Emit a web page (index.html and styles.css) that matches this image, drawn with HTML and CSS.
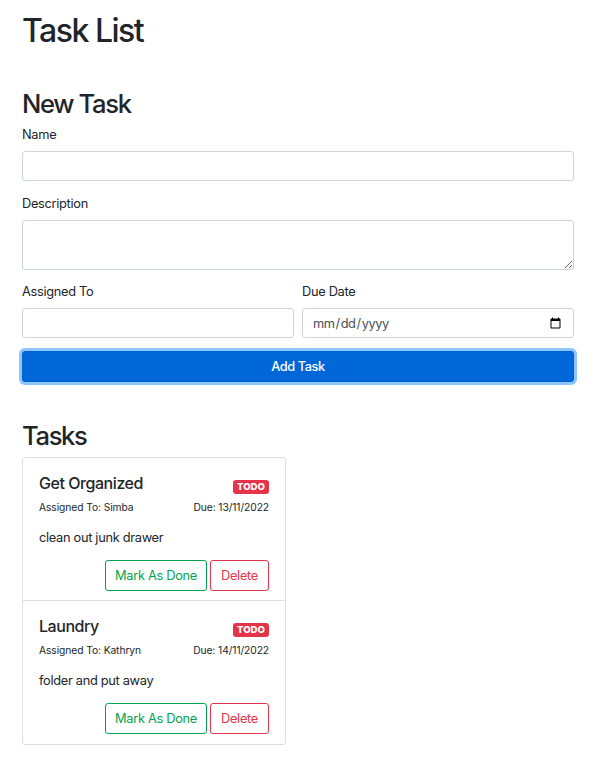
FILE: index.html
```html
<!DOCTYPE html>
<html lang="en">
<head>
<meta charset="utf-8">
<title>Task List</title>
<link rel="stylesheet" href="styles.css">
</head>
<body>
<main class="container">
  <h1>Task List</h1>
  <section>
    <h2>New Task</h2>
    <form class="task-form">
      <div class="group">
        <label for="name">Name</label>
        <input class="control" id="name" type="text">
      </div>
      <div class="group">
        <label for="description">Description</label>
        <textarea class="control area" id="description"></textarea>
      </div>
      <div class="row">
        <div class="group">
          <label for="assigned">Assigned To</label>
          <input class="control" id="assigned" type="text">
        </div>
        <div class="group">
          <label for="due">Due Date</label>
          <input class="control date" id="due" type="date">
        </div>
      </div>
      <button class="btn primary" type="button">Add Task</button>
    </form>
  </section>
  <section>
    <h2>Tasks</h2>
    <ul class="list">
      <li class="item">
        <div class="head"><h5>Get Organized</h5><span class="badge">TODO</span></div>
        <div class="meta"><span>Assigned To: Simba</span><span>Due: 13/11/2022</span></div>
        <p>clean out junk drawer</p>
        <div class="actions"><button class="btn done" type="button">Mark As Done</button><button class="btn delete" type="button">Delete</button></div>
      </li>
      <li class="item">
        <div class="head"><h5>Laundry</h5><span class="badge">TODO</span></div>
        <div class="meta"><span>Assigned To: Kathryn</span><span>Due: 14/11/2022</span></div>
        <p>folder and put away</p>
        <div class="actions"><button class="btn done" type="button">Mark As Done</button><button class="btn delete" type="button">Delete</button></div>
      </li>
    </ul>
  </section>
</main>
</body>
</html>
```
FILE: styles.css
```css
* { box-sizing: border-box; }

body {
  margin: 0;
  background: #fff;
  color: #212529;
  font: 12.8px/19px Inter, "Liberation Sans", sans-serif;
  letter-spacing: -0.3px;
}

.container { padding: 12px 22px 0; }

h1, h2, h5, p { margin: 0; font-weight: 500; }
h1 { font-size: 32px; line-height: 38px; margin-bottom: 39px; letter-spacing: -1.5px; font-weight: 550; }
h2 { font-size: 25.6px; line-height: 30px; margin-bottom: 6px; letter-spacing: -1.35px; font-weight: 550; }

.task-form { margin-bottom: 39px; }
.group { display: flex; flex-direction: column; margin-bottom: 13px; }
label { height: 19px; margin-bottom: 7px; }

.control {
  display: block;
  width: 100%;
  height: 30px;
  padding: 4px 10px;
  border: 1px solid #ced4da;
  border-radius: 3px;
  background: #fff;
  color: #495057;
  font: 12.8px/19px Inter, "Liberation Sans", sans-serif;
  outline: 0;
}
.area { height: 50px; resize: vertical; }
.date { padding: 4px 9px; letter-spacing: -0.45px; }
.date::-webkit-calendar-picker-indicator { margin-left: 24px; }

.row { display: grid; grid-template-columns: 1fr 1fr; gap: 8px; margin-top: -1px; }

.btn {
  height: 31px;
  padding: 0 9px;
  border: 1px solid;
  border-radius: 3px;
  background: #fff;
  font: 12.8px/19px Inter, "Liberation Sans", sans-serif;
  letter-spacing: -0.3px;
  white-space: nowrap;
}
.primary {
  display: block;
  width: 100%;
  color: #fff;
  background: #0067d8;
  border-color: #0062cc;
  font-weight: 500;
  letter-spacing: -0.45px;
  box-shadow: 0 0 0 3px #8fc5ff;
}
.done { color: #00a550; width: 102px; }
.delete { color: #e4344a; width: 59px; }

.list {
  width: 264px;
  margin: 0;
  padding: 0;
  list-style: none;
  border: 1px solid #dfdfdf;
  border-radius: 3px;
}
.item { height: 142px; padding: 16px 16px 0; }
.item + .item { height: 144px; border-top: 1px solid #dfdfdf; }
.head { display: flex; justify-content: space-between; height: 24px; }
h5 { font-size: 16px; line-height: 19px; letter-spacing: -0.45px; }
.badge {
  width: 36px;
  height: 14px;
  margin-top: 6px;
  border-radius: 3px;
  background: #e4344a;
  color: #fff;
  font-size: 9.6px;
  line-height: 14px;
  font-weight: 800;
  letter-spacing: 0;
  text-align: center;
}
.meta { display: flex; justify-content: space-between; font-size: 10.24px; line-height: 19px; letter-spacing: -0.07px; }
.item p { margin-top: 11px; font-weight: 400; }
.actions { display: flex; justify-content: flex-end; gap: 3px; margin-top: 13px; }
```
